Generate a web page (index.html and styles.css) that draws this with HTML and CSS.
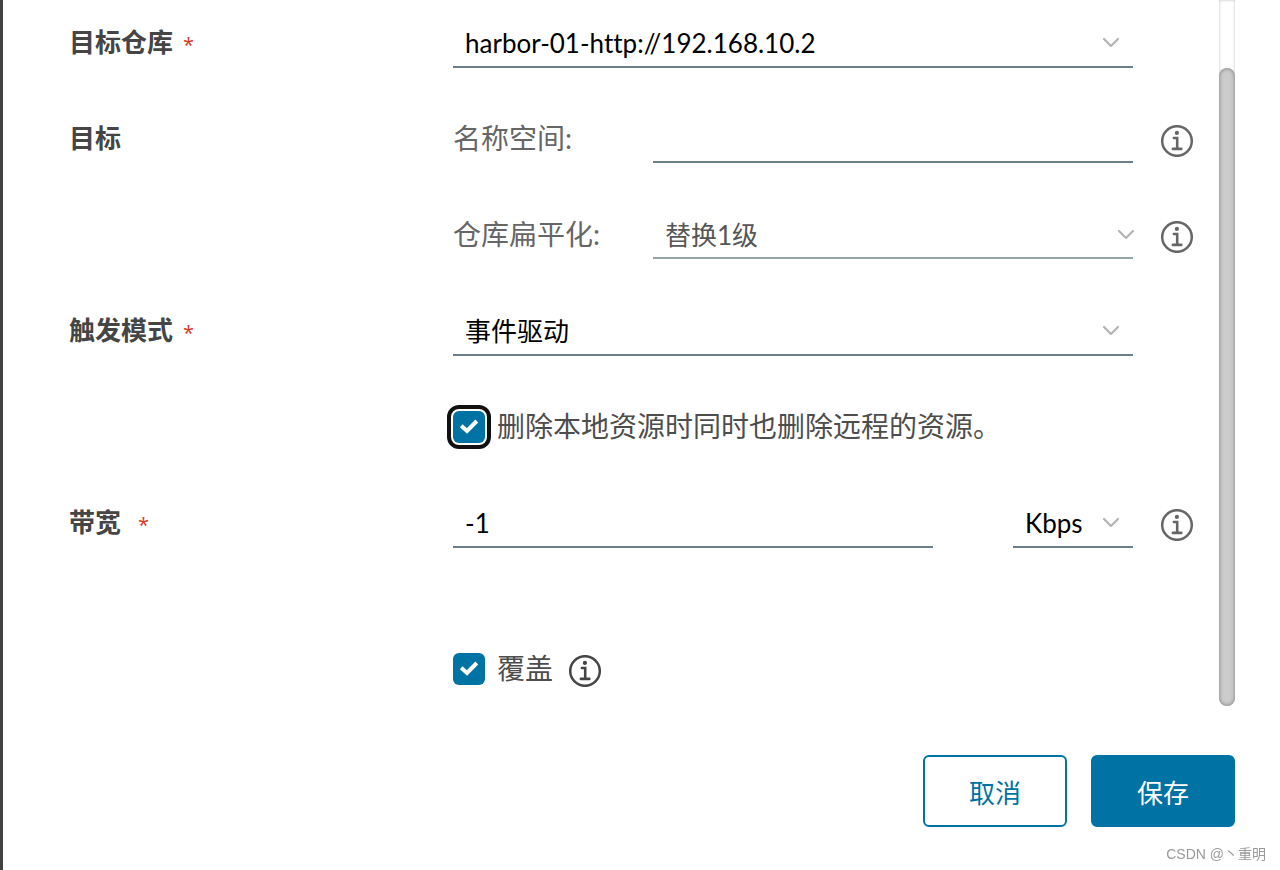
FILE: index.html
```html
<!DOCTYPE html>
<html lang="zh-CN">
<head>
<meta charset="utf-8">
<meta name="viewport" content="width=device-width, initial-scale=1">
<title>复制规则</title>
<link rel="stylesheet" href="styles.css">
</head>
<body>
<svg class="symbols" aria-hidden="true">
  <symbol id="chevron" viewBox="0 0 18 12"><path d="M2 2l7 7 7-7" fill="none" stroke="currentColor" stroke-width="2.2" stroke-linecap="round" stroke-linejoin="round"/></symbol>
  <symbol id="info" viewBox="0 0 32 32"><circle cx="16" cy="16" r="14.8" fill="none" stroke="currentColor" stroke-width="2.5"/><circle cx="15.9" cy="7.900" r="2.1" fill="currentColor"/><path d="M12.900 13h3.300v10.800M11.900 23.900h8.400" fill="none" stroke="currentColor" stroke-width="2.600" stroke-linecap="round"/></symbol>
  <symbol id="check" viewBox="0 0 32 32"><path d="M8.200 14.800L14 20L23.800 10" fill="none" stroke="currentColor" stroke-width="4"/></symbol>
</svg>
<main class="dialog">
  <form class="form">
    <div class="scroll">
      <div class="rows">
        <div class="row">
          <label class="label" for="registry">目标仓库<span class="required">*</span></label>
          <div class="control">
            <div class="select"><select class="field" id="registry"><option>harbor-01-http://192.168.10.2</option></select><svg class="chevron"><use href="#chevron"/></svg></div>
          </div>
        </div>
        <div class="row">
          <span class="label">目标</span>
          <div class="control">
            <label class="sublabel" for="namespace">名称空间:</label>
            <input class="field short" id="namespace" type="text">
          </div>
          <svg class="info"><use href="#info"/></svg>
        </div>
        <div class="row">
          <span class="label"></span>
          <div class="control">
            <label class="sublabel" for="flatten">仓库扁平化:</label>
            <div class="select muted"><select class="field short" id="flatten" disabled><option>替换1级</option></select><svg class="chevron"><use href="#chevron"/></svg></div>
          </div>
          <svg class="info"><use href="#info"/></svg>
        </div>
        <div class="row">
          <label class="label" for="trigger">触发模式<span class="required">*</span></label>
          <div class="control">
            <div class="select"><select class="field" id="trigger"><option>事件驱动</option></select><svg class="chevron"><use href="#chevron"/></svg></div>
          </div>
        </div>
        <div class="row">
          <span class="label"></span>
          <div class="control">
            <label class="check"><span class="tick focused"><input type="checkbox" checked><svg><use href="#check"/></svg></span>删除本地资源时同时也删除远程的资源。</label>
          </div>
        </div>
        <div class="row">
          <label class="label" for="bandwidth">带宽<span class="required spaced">*</span></label>
          <div class="control split">
            <input class="field" id="bandwidth" type="text" value="-1">
            <div class="select unit"><select class="field" aria-label="单位"><option>Kbps</option></select><svg class="chevron"><use href="#chevron"/></svg></div>
          </div>
          <svg class="info"><use href="#info"/></svg>
        </div>
        <div class="row last">
          <span class="label"></span>
          <div class="control">
            <label class="check"><span class="tick"><input type="checkbox" checked><svg><use href="#check"/></svg></span>覆盖</label>
            <svg class="info dark"><use href="#info"/></svg>
          </div>
        </div>
      </div>
      <div class="track" aria-hidden="true"><div class="thumb"></div></div>
    </div>
    <footer class="actions">
      <button class="button" type="button">取消</button>
      <button class="button primary" type="submit">保存</button>
    </footer>
  </form>
</main>
<div class="watermark">CSDN @丶重明</div>
</body>
</html>
```
FILE: styles.css
```css
* {
  box-sizing: border-box;
}

body {
  margin: 0;
  background: #fff;
  color: #4d4d4d;
  font-family: Lato, "Noto Sans CJK SC", sans-serif;
  font-size: 28px;
  font-variant-ligatures: none;
  line-height: 40px;
}

input,
select,
button {
  font-family: inherit;
  font-variant-ligatures: none;
}

.symbols {
  position: absolute;
  width: 0;
  height: 0;
}

.dialog {
  min-height: 100vh;
  border-left: 3px solid #424242;
}

.form {
  padding-right: 45px;
}

.scroll {
  display: flex;
  gap: 26px;
}

.rows {
  flex: 1;
  display: flex;
  flex-direction: column;
  gap: 48px;
  padding: 20px 0 12px 66px;
}

.row {
  display: flex;
  align-items: flex-start;
  height: 48px;
  padding-right: 60px;
}

.row:has(> .info) {
  padding-right: 0;
}

.row.last {
  margin-top: 50px;
}

.label {
  flex: 0 0 384px;
  color: #454545;
  font-size: 26px;
  font-weight: 700;
  line-height: 44px;
}

.required {
  margin-left: 10px;
  color: #d9381e;
  font-family: "Open Sans", sans-serif;
  font-size: 20px;
  font-weight: 400;
}

.required.spaced {
  margin-left: 17px;
}

.control {
  flex: 1;
  display: flex;
}

.sublabel {
  flex: 0 0 200px;
  color: #666;
  line-height: 44px;
}

.select {
  position: relative;
  flex: 1;
  color: #b3b3b3;
}

.field {
  display: block;
  flex: 1;
  width: 100%;
  min-width: 0;
  height: 48px;
  padding: 0 12px;
  border: 0;
  border-bottom: 2px solid #6a7f87;
  border-radius: 0;
  outline: 0;
  background: transparent;
  color: #000;
  font-size: 26px;
  appearance: none;
}

.field.short {
  height: 47px;
}

.field:disabled {
  border-color: #96a5aa;
  color: #565656;
  opacity: 1;
}

.chevron {
  position: absolute;
  top: 17px;
  right: 13px;
  width: 18px;
  height: 12px;
  pointer-events: none;
}

.muted .chevron {
  right: -2px;
}

.split {
  gap: 80px;
}

.unit {
  flex: 0 0 120px;
}

.info {
  flex: none;
  width: 32px;
  height: 32px;
  margin: 9px 0 0 28px;
  color: #666;
}

.info.dark {
  margin-left: 16px;
  color: #454545;
}

.check {
  display: flex;
  gap: 12px;
  line-height: 44px;
}

.tick {
  position: relative;
  width: 32px;
  height: 32px;
  margin-top: 7px;
  color: #fff;
}

.tick input {
  display: block;
  width: 32px;
  height: 32px;
  margin: 0;
  border-radius: 6px;
  background: #0072a3;
  appearance: none;
}

.tick svg {
  position: absolute;
  inset: 0;
  width: 32px;
  height: 32px;
  pointer-events: none;
}

.tick.focused input {
  outline: 4px solid #111;
  outline-offset: 2px;
}

.track {
  display: flex;
  width: 16px;
  padding-top: 68px;
  border-radius: 0 0 8px 8px;
  box-shadow: inset 0 0 3px #bbb;
}

.thumb {
  flex: 1;
  border-radius: 8px;
  background: #ccc;
  box-shadow: inset 0 0 4px #777;
}

.actions {
  display: flex;
  justify-content: flex-end;
  gap: 24px;
  padding-top: 49px;
}

.button {
  width: 144px;
  height: 72px;
  padding: 0;
  border: 2px solid #0072a3;
  border-radius: 6px;
  background: #fff;
  color: #0072a3;
  font-size: 26px;
}

.button.primary {
  background: #0072a3;
  color: #fff;
}

.watermark {
  position: fixed;
  right: 14px;
  bottom: 4px;
  color: #999;
  font-family: "Liberation Sans", "Noto Sans CJK SC", sans-serif;
  font-size: 14px;
  line-height: 24px;
}
```
